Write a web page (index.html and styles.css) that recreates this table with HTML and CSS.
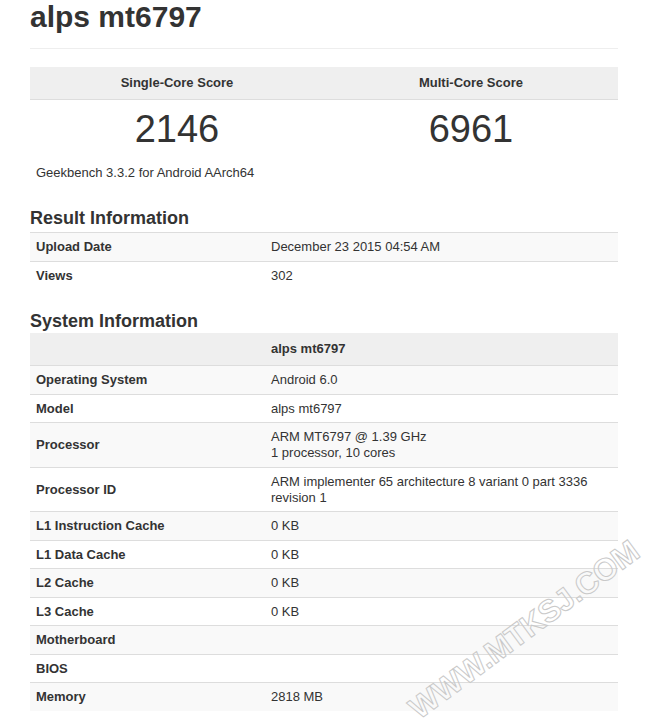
FILE: index.html
```html
<!DOCTYPE html>
<html lang="en">
<head>
  <meta charset="UTF-8" />
  <meta name="viewport" content="width=device-width, initial-scale=1.0"/>
  <title>alps mt6797 - Geekbench Browser</title>
  <link rel="stylesheet" href="styles.css">
</head>
<body>

  <div class="page">
    <h1 class="device-title">alps mt6797</h1>
    <hr class="divider">

    <!-- Scores -->
    <table class="scores">
      <thead>
        <tr>
          <th>Single-Core Score</th>
          <th>Multi-Core Score</th>
        </tr>
      </thead>
      <tbody>
        <tr>
          <td class="score">2146</td>
          <td class="score">6961</td>
        </tr>
      </tbody>
    </table>
    <p class="version">Geekbench 3.3.2 for Android AArch64</p>

    <!-- Result Information -->
    <h3 class="section-title">Result Information</h3>
    <table class="info">
      <tbody>
        <tr><td class="name">Upload Date</td><td>December 23 2015 04:54 AM</td></tr>
        <tr><td class="name">Views</td><td>302</td></tr>
      </tbody>
    </table>

    <!-- System Information -->
    <h3 class="section-title system">System Information</h3>
    <table class="info">
      <thead>
        <tr><th></th><th>alps mt6797</th></tr>
      </thead>
      <tbody>
        <tr><td class="name">Operating System</td><td>Android 6.0</td></tr>
        <tr><td class="name">Model</td><td>alps mt6797</td></tr>
        <tr><td class="name">Processor</td><td>ARM MT6797 @ 1.39 GHz<br>1 processor, 10 cores</td></tr>
        <tr><td class="name">Processor ID</td><td>ARM implementer 65 architecture 8 variant 0 part 3336 revision 1</td></tr>
        <tr><td class="name">L1 Instruction Cache</td><td>0 KB</td></tr>
        <tr><td class="name">L1 Data Cache</td><td>0 KB</td></tr>
        <tr><td class="name">L2 Cache</td><td>0 KB</td></tr>
        <tr><td class="name">L3 Cache</td><td>0 KB</td></tr>
        <tr><td class="name">Motherboard</td><td></td></tr>
        <tr><td class="name">BIOS</td><td></td></tr>
        <tr><td class="name">Memory</td><td>2818 MB</td></tr>
      </tbody>
    </table>
  </div>

  <div class="watermark">WWW.MTKSJ.COM</div>

</body>
</html>
```

FILE: styles.css
```css
:root {
  --text-color: #333333;
  --head-bg: #efefef;
  --stripe-bg: #f9f9f9;
  --line-color: #dddddd;
}

body {
  margin: 0;
  padding: 0;
  background: #ffffff;
  color: var(--text-color);
  font-family: "Liberation Sans", Arial, sans-serif;
  font-size: 13px;
}

.page {
  width: 588px;
  padding: 0 30px;
}

.device-title {
  margin: 0;
  font-size: 30px;
  line-height: 33px;
  font-weight: bold;
}

.divider {
  margin: 15px 0 18px;
  border: 0;
  border-top: 1px solid #eeeeee;
}

table {
  width: 100%;
  border-collapse: collapse;
  border-spacing: 0;
}

/* Score block */
.scores th {
  width: 50%;
  padding: 6px;
  line-height: 20px;
  background: var(--head-bg);
  border-bottom: 1px solid var(--line-color);
  font-weight: bold;
  text-align: center;
}

.scores .score {
  padding: 8px 0 0;
  font-size: 38px;
  line-height: 42px;
  text-align: center;
}

.version {
  margin: 13px 0 0;
  padding-left: 6px;
  line-height: 20px;
}

.section-title {
  margin: 25px 0 4px;
  font-size: 18px;
  line-height: 20px;
  font-weight: bold;
}

.section-title.system {
  margin: 22px 0 2px;
}

/* Info tables */
.info td,
.info th {
  padding: 6px 6px 5.5px;
  line-height: 16px;
  text-align: left;
  vertical-align: middle;
  border-top: 1px solid var(--line-color);
}

.info th {
  padding: 8px 6px;
  border-top: 0;
  background: var(--head-bg);
  font-weight: bold;
}

.info td.name {
  width: 223px;
  font-weight: bold;
}

.info tbody tr:nth-child(odd) {
  background: var(--stripe-bg);
}

.watermark {
  position: absolute;
  left: 386px;
  top: 612px;
  font-size: 31px;
  font-weight: bold;
  letter-spacing: -0.3px;
  color: transparent;
  -webkit-text-stroke: 1px #c9c9c9;
  transform: rotate(-36.5deg);
  transform-origin: center;
  white-space: nowrap;
}
```
